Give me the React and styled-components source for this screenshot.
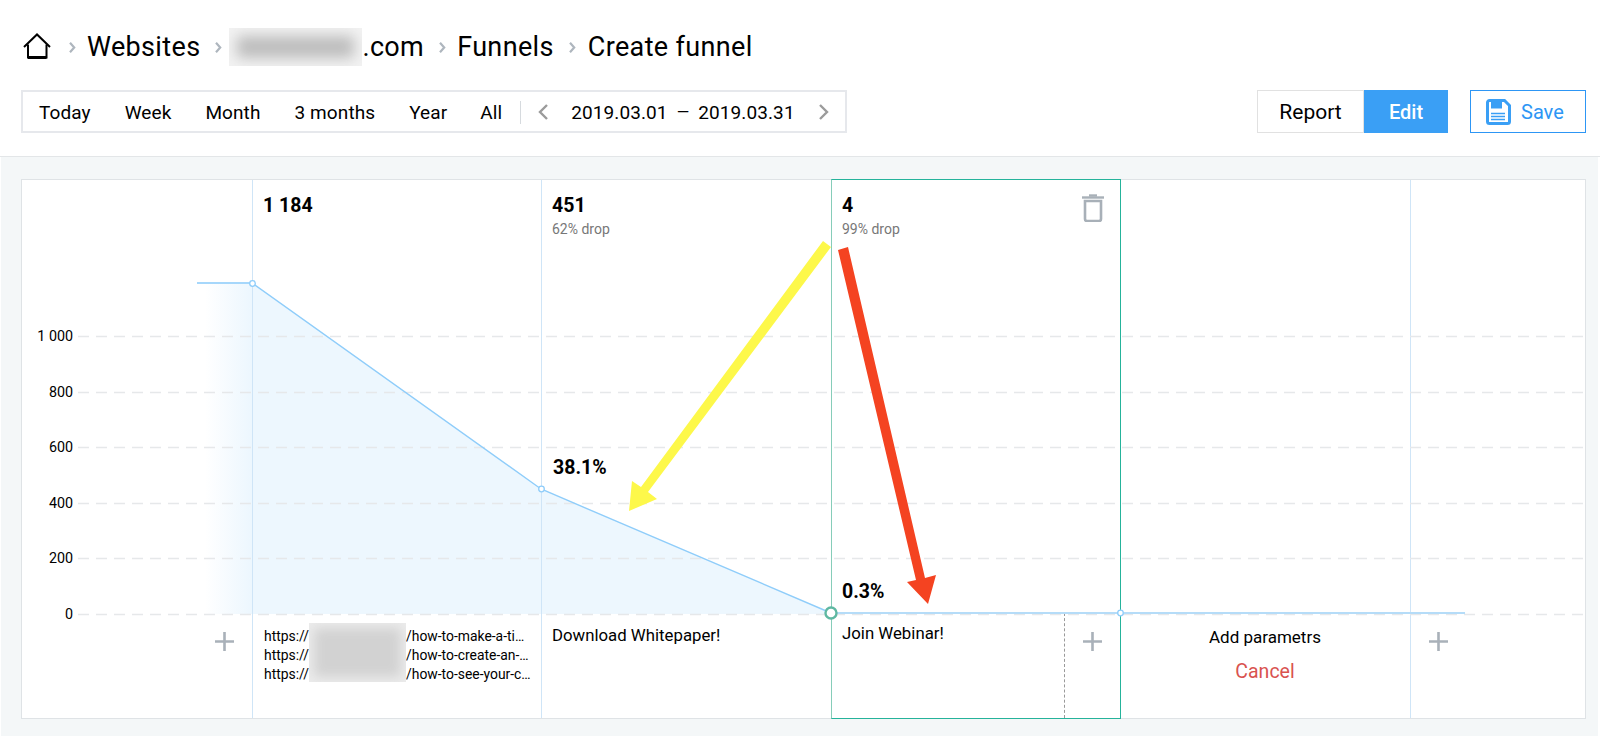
import React from 'react';
import styled, { createGlobalStyle } from 'styled-components';

const GlobalStyle = createGlobalStyle`
  html, body {
    margin: 0;
    background: #fff;
    font-family: Roboto, "Liberation Sans", sans-serif;
    color: #000;
  }
`;

const Header = styled.header`
  box-sizing: border-box;
  height: 157px;
  padding: 25px 14px 0 21px;
  border-bottom: 1px solid #e3e6e8;
`;

const Breadcrumbs = styled.nav`
  display: flex;
  align-items: center;
  height: 44px;
  font-size: 27px;
  letter-spacing: 0.35px;
`;

const Crumb = styled.span`
  display: flex;
  align-items: center;
`;

const HomeLink = styled.span`
  display: flex;
  margin: -2px 0 0 2px;
`;

const Separator = styled.span`
  display: flex;
  margin: 0 ${(p) => p.$right}px 0 ${(p) => p.$left}px;
`;

const BlurBox = styled.span`
  display: inline-block;
  width: ${(p) => p.$width}px;
  height: ${(p) => p.$height}px;
  background: ${(p) => p.$color || '#bdbdbd'};
  box-shadow: inset 0 0 14px 8px #f3f3f3;
`;

const Controls = styled.div`
  display: flex;
  justify-content: space-between;
  margin-top: 21px;
`;

const RangeBar = styled.div`
  box-sizing: border-box;
  display: flex;
  align-items: center;
  width: 826px;
  height: 43px;
  padding: 1px 0 0 16px;
  border: 2px solid #e6e8ec;
  font-size: 19px;
  letter-spacing: 0.1px;
`;

const RangeItem = styled.span`
  margin-right: ${(p) => p.$gap}px;
`;

const RangeDivider = styled.span`
  width: 1px;
  height: 23px;
  background: #d6dade;
  margin-right: 17px;
`;

const DateText = styled.span`
  display: flex;
  align-items: center;
  margin: 0 24px 0 23px;
  white-space: nowrap;
`;

const DateDash = styled.span`
  margin: 0 9px;
  font-size: 16px;
`;

const Actions = styled.div`
  display: flex;
  gap: 22px;
`;

const Segments = styled.div`
  display: flex;
`;

const Segment = styled.span`
  box-sizing: border-box;
  display: flex;
  align-items: center;
  justify-content: center;
  height: 43px;
  width: ${(p) => (p.$active ? 84 : 107)}px;
  font-size: ${(p) => (p.$active ? 20 : 21)}px;
  font-weight: ${(p) => (p.$active ? 500 : 400)};
  color: ${(p) => (p.$active ? '#fff' : '#000')};
  background: ${(p) => (p.$active ? '#3a9ff5' : '#fff')};
  border: 1px solid ${(p) => (p.$active ? '#3a9ff5' : '#e1e1e1')};
`;

const SaveButton = styled.span`
  box-sizing: border-box;
  display: flex;
  align-items: center;
  gap: 10px;
  width: 116px;
  height: 43px;
  padding-left: 15px;
  font-size: 20px;
  color: #2d96f5;
  border: 1px solid #2d96f5;
`;

const Main = styled.main`
  margin: 0 2px 2px 1px;
  padding: 22px 12px 17px 20px;
  background: #f4f7f8;
`;

const Panel = styled.section`
  position: relative;
  box-sizing: border-box;
  display: grid;
  grid-template-columns: 230px 289px 290px 289px 290px 1fr;
  height: 540px;
  background: #fff;
  border: 1px solid #dfe3e6;
`;

const Column = styled.div`
  display: flex;
  flex-direction: column;
  min-width: 0;
  border-left: ${(p) => (p.$plain ? 'none' : '1px solid #cfe5f7')};
`;

const SelectedColumn = styled(Column)`
  position: relative;
  z-index: 1;
  margin: -1px -1px -1px 0;
  border: 1px solid #25b39b;
  border-left-color: #86cdb9;
`;

const Stats = styled.div`
  padding: 15px 10px 0;
`;

const Count = styled.div`
  font-size: 19.5px;
  font-weight: 700;
  line-height: 21px;
`;

const Drop = styled.div`
  margin-top: 5px;
  font-size: 14px;
  line-height: 16px;
  color: #777;
`;

const TrashButton = styled.span`
  position: absolute;
  top: 14px;
  right: 16px;
  display: flex;
`;

const Footer = styled.div`
  box-sizing: border-box;
  display: flex;
  height: 105px;
  margin-top: auto;
  padding: ${(p) => p.$padding || '0'};
  justify-content: ${(p) => p.$justify || 'flex-start'};
`;

const StepName = styled.div`
  padding: ${(p) => p.$top}px 10px 0;
  font-size: 16.8px;
  line-height: 19px;
`;

const UrlList = styled.div`
  position: relative;
  padding: 14px 11px 0;
  font-size: 13.9px;
  line-height: 19px;
  white-space: nowrap;
`;

const UrlPatch = styled(BlurBox)`
  position: absolute;
  top: 10px;
  left: 56px;
  box-shadow: inset 0 0 12px 5px #ececec;
`;

const UrlGap = styled.span`
  display: inline-block;
  width: 97px;
`;

const SplitName = styled.div`
  width: 232px;
  border-right: 1px dashed #999;
`;

const PlusCell = styled.div`
  flex: 1;
  display: flex;
  justify-content: center;
  padding-top: ${(p) => p.$top || 19}px;
`;

const ParamCell = styled.div`
  flex: 1;
  display: flex;
  flex-direction: column;
  align-items: center;
  padding-top: 15px;
  font-size: 17px;
`;

const AddParams = styled.span`
  line-height: 19px;
`;

const Cancel = styled.span`
  margin-top: 14px;
  font-size: 19.5px;
  line-height: 22px;
  color: #d9534f;
`;

const ChartLayer = styled.svg`
  position: absolute;
  z-index: 2;
  top: -1px;
  left: -1px;
  pointer-events: none;
`;

const AxisLabel = styled.text`
  font-size: 14.3px;
  fill: #000;
  text-anchor: end;
  dominant-baseline: middle;
`;

const Percent = styled.span`
  position: absolute;
  z-index: 3;
  left: ${(p) => p.$left}px;
  top: ${(p) => p.$top}px;
  font-size: 19.5px;
  font-weight: 700;
  line-height: 21px;
`;

const grid = [
  [336, '1 000'],
  [392, '800'],
  [447, '600'],
  [503, '400'],
  [558, '200'],
  [614, '0'],
];

function CrumbChevron() {
  return (
    <svg width="7" height="11" viewBox="0 0 7 11" fill="none">
      <path d="M1 .8l4.2 4.7L1 10.2" stroke="#aeb6be" strokeWidth="2.2" />
    </svg>
  );
}

function DateChevron({ dir }) {
  const d = dir === 'left' ? 'M9 1L2 8l7 7' : 'M1 1l7 7-7 7';
  return (
    <svg width="10" height="16" viewBox="0 0 10 16" fill="none">
      <path d={d} stroke="#9b9b9b" strokeWidth="2.4" />
    </svg>
  );
}

function PlusIcon({ size = 19 }) {
  return (
    <svg width={size} height={size} viewBox="0 0 19 19">
      <path d="M9.5 0v19M0 9.5h19" stroke="#a9b1b9" strokeWidth="2.6" />
    </svg>
  );
}

function HomeIcon() {
  return (
    <svg width="28" height="26" viewBox="0 0 28 26" fill="none">
      <path d="M1 14L14 1.5 27 14" stroke="#000" strokeWidth="2" />
      <path d="M5 11.5V24.5H23.5V11.5" stroke="#000" strokeWidth="2" />
      <path d="M5 24.5H23.5" stroke="#000" strokeWidth="3" />
    </svg>
  );
}

function SaveIcon() {
  return (
    <svg width="25" height="26" viewBox="0 0 25 26" fill="none">
      <path
        d="M3.5 1.5h15l5 5v16a2 2 0 0 1-2 2h-18a2 2 0 0 1-2-2v-19a2 2 0 0 1 2-2z"
        fill="#fff"
        stroke="#3a9ff5"
        strokeWidth="3"
      />
      <path d="M5 2h11v7.500H5z" fill="#3a9ff5" />
      <path d="M5 14.500h14M5 17.500h14M5 20.500h14" stroke="#3a9ff5" strokeWidth="1.3" />
    </svg>
  );
}

function TrashIcon() {
  return (
    <svg width="22" height="28" viewBox="0 0 22 28" fill="none">
      <path d="M0 3.500h22" stroke="#a8b0b8" strokeWidth="2.4" />
      <path d="M7 1.500h8" stroke="#a8b0b8" strokeWidth="2.4" />
      <path
        d="M3 7h16v18a2 2 0 0 1-2 2H5a2 2 0 0 1-2-2z"
        stroke="#a8b0b8"
        strokeWidth="2.6"
      />
    </svg>
  );
}

function Chart() {
  return (
    <ChartLayer width="1565" height="540" viewBox="21 179 1565 540">
      <defs>
        <linearGradient id="fade" x1="205" x2="250" y1="0" y2="0" gradientUnits="userSpaceOnUse">
          <stop offset="0" stopColor="#edf7fe" stopOpacity="0" />
          <stop offset="1" stopColor="#edf7fe" />
        </linearGradient>
      </defs>
      <rect x="205" y="284" width="47" height="330" fill="url(#fade)" />
      <path d="M252 283L541 489L831 613V614H252Z" fill="#edf7fe" />
      <path d="M252.500 283V614M541.500 489V614" stroke="#cfe5f7" />
      {grid.map(([y, label]) => (
        <g key={y}>
          <path d={`M78 ${y + 0.5}H1585`} stroke="#e6e8ea" strokeWidth="1.5" strokeDasharray="11 7" />
          <AxisLabel x="73" y={y + 1}>{label}</AxisLabel>
        </g>
      ))}
      <path d="M197 283H252" fill="none" stroke="#a6d7fb" strokeWidth="2" />
      <path d="M252 283L541 489L831 613" fill="none" stroke="#8fcdfa" strokeWidth="1.4" />
      <path d="M831 613H1465" fill="none" stroke="#b5dcf8" strokeWidth="2" />
      <circle cx="252.500" cy="283.500" r="2.800" fill="#fff" stroke="#8fcdfa" strokeWidth="1.300" />
      <circle cx="541.500" cy="489" r="2.800" fill="#fff" stroke="#8fcdfa" strokeWidth="1.300" />
      <circle cx="1120.500" cy="613" r="2.800" fill="#fff" stroke="#8fcdfa" strokeWidth="1.300" />
      <circle cx="831" cy="613" r="5.500" fill="#fff" stroke="#5fb8a2" strokeWidth="2.400" />
      <polygon
        points="823,241 831,247 648,492 657,499 629,511 632,481 641,487"
        fill="#fdf84a"
      />
      <polygon
        points="838,250 848,247 925,578 936,575 928,604 907,582 916,580"
        fill="#f44321"
      />
    </ChartLayer>
  );
}

export default function App() {
  return (
    <>
      <GlobalStyle />
      <Header>
        <Breadcrumbs>
          <HomeLink><HomeIcon /></HomeLink>
          <Separator $left={18} $right={11}><CrumbChevron /></Separator>
          <Crumb>Websites</Crumb>
          <Separator $left={15} $right={7}><CrumbChevron /></Separator>
          <Crumb><BlurBox $width={133} $height={38} />.com</Crumb>
          <Separator $left={15} $right={11}><CrumbChevron /></Separator>
          <Crumb>Funnels</Crumb>
          <Separator $left={15} $right={12}><CrumbChevron /></Separator>
          <Crumb>Create funnel</Crumb>
        </Breadcrumbs>
        <Controls>
          <RangeBar>
            <RangeItem $gap={34}>Today</RangeItem>
            <RangeItem $gap={34}>Week</RangeItem>
            <RangeItem $gap={34}>Month</RangeItem>
            <RangeItem $gap={34}>3 months</RangeItem>
            <RangeItem $gap={33}>Year</RangeItem>
            <RangeItem $gap={18}>All</RangeItem>
            <RangeDivider />
            <DateChevron dir="left" />
            <DateText>
              <span>2019.03.01</span>
              <DateDash>—</DateDash>
              <span>2019.03.31</span>
            </DateText>
            <DateChevron dir="right" />
          </RangeBar>
          <Actions>
            <Segments>
              <Segment>Report</Segment>
              <Segment $active>Edit</Segment>
            </Segments>
            <SaveButton><SaveIcon />Save</SaveButton>
          </Actions>
        </Controls>
      </Header>
      <Main>
        <Panel>
          <Column $plain>
            <Footer $justify="flex-end" $padding="19px 18px 0 0"><PlusIcon /></Footer>
          </Column>
          <Column>
            <Stats><Count>1 184</Count></Stats>
            <Footer>
              <UrlList>
                <UrlPatch $width={97} $height={59} $color="#d2d2d2" />
                <div>https://<UrlGap />/how-to-make-a-ti…</div>
                <div>https://<UrlGap />/how-to-create-an-…</div>
                <div>https://<UrlGap />/how-to-see-your-c…</div>
              </UrlList>
            </Footer>
          </Column>
          <Column>
            <Stats>
              <Count>451</Count>
              <Drop>62% drop</Drop>
            </Stats>
            <Footer><StepName $top={13}>Download Whitepaper!</StepName></Footer>
          </Column>
          <SelectedColumn>
            <Stats>
              <Count>4</Count>
              <Drop>99% drop</Drop>
            </Stats>
            <TrashButton><TrashIcon /></TrashButton>
            <Footer>
              <SplitName><StepName $top={11}>Join Webinar!</StepName></SplitName>
              <PlusCell><PlusIcon /></PlusCell>
            </Footer>
          </SelectedColumn>
          <Column $plain>
            <Footer><ParamCell>
              <AddParams>Add parametrs</AddParams>
              <Cancel>Cancel</Cancel>
            </ParamCell></Footer>
          </Column>
          <Column>
            <Footer $justify="flex-start" $padding="19px 0 0 18px"><PlusIcon /></Footer>
          </Column>
          <Chart />
          <Percent $left={531} $top={277}>38.1%</Percent>
          <Percent $left={820} $top={401}>0.3%</Percent>
        </Panel>
      </Main>
    </>
  );
}
